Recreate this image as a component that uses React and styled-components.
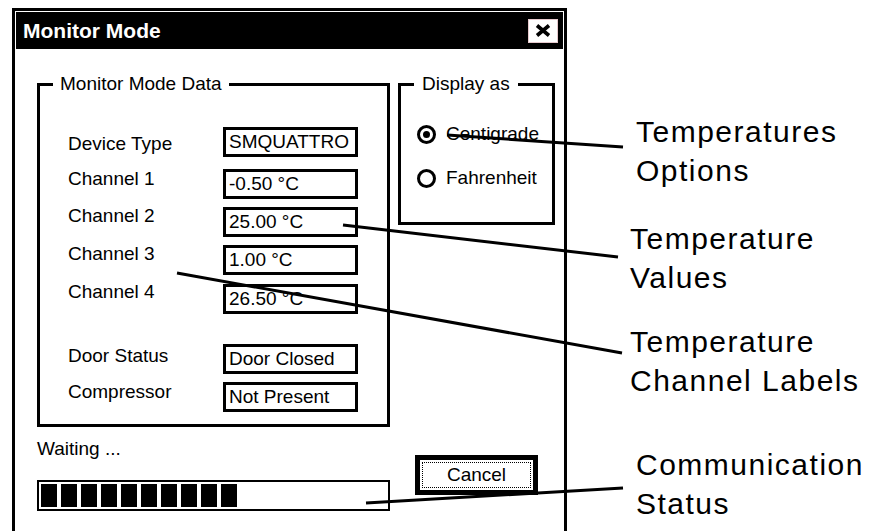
import styled, { createGlobalStyle } from "styled-components";

const GlobalStyle = createGlobalStyle`
  html, body {
    margin: 0;
    padding: 0;
    background: #fff;
  }
  body {
    font-family: "Liberation Sans", Arial, sans-serif;
    color: #000;
  }
`;

const readings = [
  { label: "Device Type", value: "SMQUATTRO", gap: 32, shift: 6 },
  { label: "Channel 1", value: "-0.50 °C", gap: 12, shift: -1 },
  { label: "Channel 2", value: "25.00 °C", gap: 8, shift: -2 },
  { label: "Channel 3", value: "1.00 °C", gap: 8, shift: -2 },
  { label: "Channel 4", value: "26.50 °C", gap: 9, shift: -3 },
  { label: "Door Status", value: "Door Closed", gap: 30, shift: 1 },
  { label: "Compressor", value: "Not Present", gap: 8, shift: -1 },
];

const callouts = [
  { lines: ["Temperatures", "Options"], gap: 104, indent: 6 },
  { lines: ["Temperature", "Values"], gap: 29, indent: 0 },
  { lines: ["Temperature", "Channel Labels"], gap: 25, indent: 0 },
  { lines: ["Communication", "Status"], gap: 45, indent: 6 },
];

// leader lines, page coordinates
const leaders = [
  [447, 135, 623, 147],
  [343, 225, 618, 257],
  [177, 273, 622, 353],
  [366, 503, 623, 488],
];

export default function App() {
  return (
    <>
      <GlobalStyle />
      <Page>
        <Window>
          <TitleBar>
            <span>Monitor Mode</span>
            <CloseButton aria-label="Close">
              <svg width="16" height="13" viewBox="0 0 16 13">
                <path d="M2 1.5 L14 11.5 M14 1.5 L2 11.5" stroke="#000" strokeWidth="3.6" />
              </svg>
            </CloseButton>
          </TitleBar>

          <Body>
            <TopRow>
              <DataGroup>
                <Legend $offset={-15} $pad={7}>Monitor Mode Data</Legend>
                {readings.map((r) => (
                  <Reading key={r.label} $gap={r.gap}>
                    <ReadingLabel $shift={r.shift}>{r.label}</ReadingLabel>
                    <ValueBox>{r.value}</ValueBox>
                  </Reading>
                ))}
              </DataGroup>

              <DisplayGroup>
                <Legend $offset={-3} $pad={8}>Display as</Legend>
                <RadioRow $gap={28}>
                  <RadioDot $checked />
                  <span>Centigrade</span>
                </RadioRow>
                <RadioRow $gap={22}>
                  <RadioDot />
                  <span>Fahrenheit</span>
                </RadioRow>
              </DisplayGroup>
            </TopRow>

            <BottomRow>
              <StatusColumn>
                <StatusText>Waiting ...</StatusText>
                <ProgressBar>
                  {Array.from({ length: 10 }).map((_, i) => (
                    <ProgressBlock key={i} />
                  ))}
                </ProgressBar>
              </StatusColumn>
              <CancelButton>
                <FocusRing>Cancel</FocusRing>
              </CancelButton>
            </BottomRow>
          </Body>
        </Window>

        <Callouts>
          {callouts.map((c) => (
            <Callout key={c.lines.join(" ")} $gap={c.gap} $indent={c.indent}>
              {c.lines.map((l) => (
                <div key={l}>{l}</div>
              ))}
            </Callout>
          ))}
        </Callouts>

        <Leaders width="875" height="531" viewBox="0 0 875 531">
          {leaders.map(([x1, y1, x2, y2], i) => (
            <line key={i} x1={x1} y1={y1} x2={x2} y2={y2} stroke="#000" strokeWidth="3" />
          ))}
        </Leaders>
      </Page>
    </>
  );
}

const Page = styled.div`
  position: relative;
  width: 875px;
  height: 531px;
  overflow: hidden;
  box-sizing: border-box;
  padding: 8px 0 0 12px;
  display: flex;
  align-items: flex-start;
`;

const Window = styled.div`
  flex-shrink: 0;
  width: 555px;
  height: 545px;
  box-sizing: border-box;
  border: 3px solid #000;
  padding: 1px;
  display: flex;
  flex-direction: column;
  font-size: 19px;
`;

const TitleBar = styled.div`
  height: 37px;
  flex-shrink: 0;
  background: #000;
  color: #fff;
  display: flex;
  align-items: center;
  justify-content: space-between;
  padding: 0 5px 0 7px;
  font-size: 21px;
  font-weight: bold;
`;

const CloseButton = styled.button`
  width: 30px;
  height: 24px;
  padding: 0;
  background: #fff;
  border: 1px solid #e6c9cd;
  display: flex;
  align-items: center;
  justify-content: center;
`;

const Body = styled.div`
  padding: 24px 7px 0 21px;
`;

const TopRow = styled.div`
  display: flex;
  align-items: flex-start;
  gap: 8px;
`;

const Group = styled.fieldset`
  margin: 0;
  min-width: 0;
  box-sizing: border-box;
  border: 3px solid #000;
`;

const DataGroup = styled(Group)`
  width: 353px;
  padding: 0 0 12px 28px;
`;

const DisplayGroup = styled(Group)`
  width: 157px;
  height: 152px;
  padding: 0 0 0 16px;
`;

const Legend = styled.legend`
  margin-left: ${(p) => p.$offset}px;
  padding: 0 ${(p) => p.$pad}px;
  line-height: 22px;
  font-size: 19px;
`;

const Reading = styled.div`
  display: grid;
  grid-template-columns: 155px 135px;
  align-items: start;
  margin-top: ${(p) => p.$gap}px;
`;

const ReadingLabel = styled.div`
  line-height: 22px;
  margin-top: ${(p) => p.$shift}px;
`;

const ValueBox = styled.div`
  height: 30px;
  box-sizing: border-box;
  border: 3px solid #000;
  padding: 0 3px;
  line-height: 24px;
  white-space: nowrap;
  overflow: hidden;
`;

const RadioRow = styled.div`
  display: flex;
  align-items: center;
  height: 22px;
  gap: 10px;
  margin-top: ${(p) => p.$gap}px;
`;

const RadioDot = styled.span`
  width: 19px;
  height: 19px;
  box-sizing: border-box;
  border: 3px solid #000;
  border-radius: 50%;
  display: flex;
  align-items: center;
  justify-content: center;
  &::after {
    content: "";
    width: 7px;
    height: 7px;
    border-radius: 50%;
    background: ${(p) => (p.$checked ? "#000" : "transparent")};
  }
`;

const BottomRow = styled.div`
  display: flex;
  align-items: flex-start;
  margin-top: 11px;
`;

const StatusColumn = styled.div`
  width: 353px;
  display: flex;
  flex-direction: column;
`;

const StatusText = styled.div`
  line-height: 22px;
`;

const ProgressBar = styled.div`
  margin-top: 20px;
  height: 31px;
  box-sizing: border-box;
  border: 2px solid #000;
  padding: 2px;
  display: flex;
  gap: 4px;
`;

const ProgressBlock = styled.span`
  width: 16px;
  background: #000;
`;

const CancelButton = styled.button`
  margin: 17px 0 0 25px;
  width: 123px;
  height: 40px;
  box-sizing: border-box;
  background: #fff;
  border: 5px solid #000;
  padding: 2px;
  font: inherit;
  color: #000;
  display: flex;
`;

const FocusRing = styled.span`
  flex: 1;
  border: 1px dotted #000;
  display: flex;
  align-items: center;
  justify-content: center;
  line-height: 22px;
`;

const Callouts = styled.div`
  margin-left: 63px;
  display: flex;
  flex-direction: column;
  font-size: 30px;
  line-height: 39px;
  letter-spacing: 1.5px;
  white-space: nowrap;
`;

const Callout = styled.div`
  margin-top: ${(p) => p.$gap}px;
  padding-left: ${(p) => p.$indent}px;
`;

const Leaders = styled.svg`
  position: absolute;
  top: 0;
  left: 0;
  pointer-events: none;
`;
